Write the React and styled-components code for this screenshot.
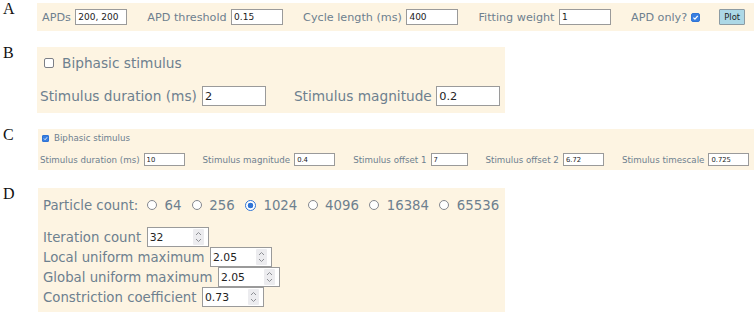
import React from 'react'
import styled, { createGlobalStyle } from 'styled-components'

const SLATE = '#6d808f'
const CREAM = '#fdf4e2'

const Global = createGlobalStyle`
  *, *::before, *::after { box-sizing: border-box; }
  html, body { margin: 0; padding: 0; background: #fff; }
  body { font-family: "DejaVu Sans", Verdana, sans-serif; }
`

const Page = styled.div`
  display: flex;
  flex-direction: column;
  width: 756px;
  padding: 3px 2px 0 2px;
`

const Section = styled.section`
  display: flex;
  align-items: flex-start;
  margin-top: ${p => p.$top || 0}px;
`

const Letter = styled.div`
  flex: none;
  width: ${p => p.$w || 35}px;
  padding-left: 1px;
  font-family: "Liberation Serif", "Times New Roman", serif;
  font-size: 16px;
  line-height: 12px;
  color: #111;
`

const Panel = styled.div`
  display: flex;
  flex-direction: column;
  gap: ${p => p.$gap || 0}px;
  width: ${p => p.$w}px;
  padding: ${p => p.$pad};
  background: ${CREAM};
  color: ${SLATE};
  font-size: ${p => p.$fs}px;
`

const Row = styled.div`
  display: flex;
  align-items: center;
  height: ${p => p.$h}px;
  white-space: nowrap;
`

const Field = styled.label`
  display: inline-flex;
  align-items: center;
  gap: ${p => p.$gap}px;
  margin-right: ${p => p.$after || 0}px;
  white-space: nowrap;
`

const TextBox = styled.input`
  width: ${p => p.$w}px;
  height: ${p => p.$h}px;
  padding: 0 0 0 2px;
  border: 1px solid #9a9a9a;
  border-radius: 0;
  background: #fff;
  color: #222;
  font-family: "DejaVu Sans", Verdana, sans-serif;
  font-size: ${p => p.$fs}px;
  outline: none;
`

const Box = styled.span`
  display: inline-flex;
  align-items: center;
  justify-content: center;
  flex: none;
  width: ${p => p.$size}px;
  height: ${p => p.$size}px;
  margin: ${p => p.$margin || 0};
  border: 1px solid ${p => (p.$on ? '#2f74d6' : '#7c7f86')};
  border-radius: ${p => (p.$size > 8 ? 2 : 1)}px;
  background: ${p => (p.$on ? '#3a7fe0' : '#fff')};
`

function Check({ size, on, margin }) {
  return (
    <Box $size={size} $on={on} $margin={margin}>
      {on && (
        <svg width={size - 2} height={size - 2} viewBox="0 0 10 10">
          <path d="M2 5.2 L4.2 7.4 L8.2 2.6" fill="none" stroke="#fff" strokeWidth="1.8" />
        </svg>
      )}
    </Box>
  )
}

const PlotButton = styled.button`
  width: 26px;
  height: 16px;
  padding: 0;
  border: 1px solid #8c9ba3;
  border-radius: 1px;
  background: #add8e6;
  color: #222;
  font-family: "DejaVu Sans", Verdana, sans-serif;
  font-size: 8.4px;
`

const Option = styled.label`
  display: inline-flex;
  align-items: center;
  gap: 7.5px;
  margin-left: ${p => p.$first ? 8.7 : 10.3}px;
`

const Radio = styled.input.attrs({ type: 'radio' })`
  appearance: none;
  width: 10px;
  height: 10px;
  margin: 0;
  border: 1px solid #85888e;
  border-radius: 50%;
  background: #fff;

  &:checked {
    width: 11px;
    height: 11px;
    border-color: #2f74d6;
    background: radial-gradient(circle, #2f74d6 0 2.6px, #fff 3.1px);
  }
`

const NumBox = styled.span`
  display: inline-flex;
  align-items: center;
  width: 62px;
  height: 20px;
  margin-left: 5.5px;
  border: 1px solid #9a9a9a;
  background: #fff;
`

const NumInput = styled.input`
  flex: 1;
  min-width: 0;
  height: 100%;
  padding: 0 0 0 2px;
  border: none;
  background: transparent;
  color: #222;
  font-family: "DejaVu Sans", Verdana, sans-serif;
  font-size: 10.8px;
  outline: none;
`

const Spin = styled.span`
  display: flex;
  width: 11px;
  height: 16px;
  margin-right: 4px;
  background: #ececef;
  border-radius: 1px;
`

function Spinner() {
  return (
    <Spin>
      <svg width="11" height="16" viewBox="0 0 11 16">
        <path d="M3 6 L5.5 3.5 L8 6" fill="none" stroke="#8d8f94" strokeWidth="1" />
        <path d="M3 10 L5.5 12.5 L8 10" fill="none" stroke="#8d8f94" strokeWidth="1" />
      </svg>
    </Spin>
  )
}

function NumberField({ label, value }) {
  return (
    <Row $h={20}>
      {label}
      <NumBox>
        <NumInput defaultValue={value} />
        <Spinner />
      </NumBox>
    </Row>
  )
}

const Stack = styled.div`
  display: flex;
  flex-direction: column;
  margin-top: 12px;
`

const counts = [64, 256, 1024, 4096, 16384, 65536]

export default function App() {
  return (
    <Page>
      <Global />

      <Section>
        <Letter>A</Letter>
        <Panel $w={717} $pad="0 0 0 5px" $fs={11.2}>
          <Row $h={28}>
            <Field $gap={4.5} $after={20}>APDs<TextBox $w={52} $h={16} $fs={9} defaultValue="200, 200" /></Field>
            <Field $gap={4.5} $after={20}>APD threshold<TextBox $w={52} $h={16} $fs={9} defaultValue="0.15" /></Field>
            <Field $gap={4.5} $after={20}>Cycle length (ms)<TextBox $w={52} $h={16} $fs={9} defaultValue="400" /></Field>
            <Field $gap={4.5} $after={20}>Fitting weight<TextBox $w={52} $h={16} $fs={9} defaultValue="1" /></Field>
            <Field $gap={4} $after={19}>APD only?<Check size={9} on /></Field>
            <PlotButton>Plot</PlotButton>
          </Row>
        </Panel>
      </Section>

      <Section $top={16}>
        <Letter>B</Letter>
        <Panel $w={468} $pad="6px 0 7px 3px" $fs={13.7} $gap={13}>
          <Row $h={20}>
            <Check size={10} margin="0 8px 0 4px" />
            Biphasic stimulus
          </Row>
          <Row $h={20}>
            <Field $gap={5} $after={28}>Stimulus duration (ms)<TextBox $w={64} $h={20} $fs={11.3} defaultValue="2" /></Field>
            <Field $gap={4.5}>Stimulus magnitude<TextBox $w={64} $h={20} $fs={11.3} defaultValue="0.2" /></Field>
          </Row>
        </Panel>
      </Section>

      <Section $top={16}>
        <Letter $w={36}>C</Letter>
        <Panel $w={716} $pad="4px 0 4px 2px" $fs={8.7} $gap={10}>
          <Row $h={10}>
            <Check size={7} on margin="0 5px 0 2px" />
            Biphasic stimulus
          </Row>
          <Row $h={13}>
            <Field $gap={4} $after={18}>Stimulus duration (ms)<TextBox $w={41} $h={13} $fs={6.8} defaultValue="10" /></Field>
            <Field $gap={4} $after={18}>Stimulus magnitude<TextBox $w={41} $h={13} $fs={6.8} defaultValue="0.4" /></Field>
            <Field $gap={4} $after={18}>Stimulus offset 1<TextBox $w={37} $h={13} $fs={6.8} defaultValue="7" /></Field>
            <Field $gap={4} $after={18}>Stimulus offset 2<TextBox $w={41} $h={13} $fs={6.8} defaultValue="6.72" /></Field>
            <Field $gap={4}>Stimulus timescale<TextBox $w={41} $h={13} $fs={6.8} defaultValue="0.725" /></Field>
          </Row>
        </Panel>
      </Section>

      <Section $top={18}>
        <Letter $w={36}>D</Letter>
        <Panel $w={467} $pad="7px 0 5px 5px" $fs={13.3}>
          <Row $h={20}>
            Particle count:
            {counts.map((n, i) => (
              <Option key={n} $first={i === 0}>
                <Radio name="particles" defaultChecked={n === 1024} />
                {n}
              </Option>
            ))}
          </Row>
          <Stack>
            <NumberField label="Iteration count" value="32" />
            <NumberField label="Local uniform maximum" value="2.05" />
            <NumberField label="Global uniform maximum" value="2.05" />
            <NumberField label="Constriction coefficient" value="0.73" />
          </Stack>
        </Panel>
      </Section>
    </Page>
  )
}
